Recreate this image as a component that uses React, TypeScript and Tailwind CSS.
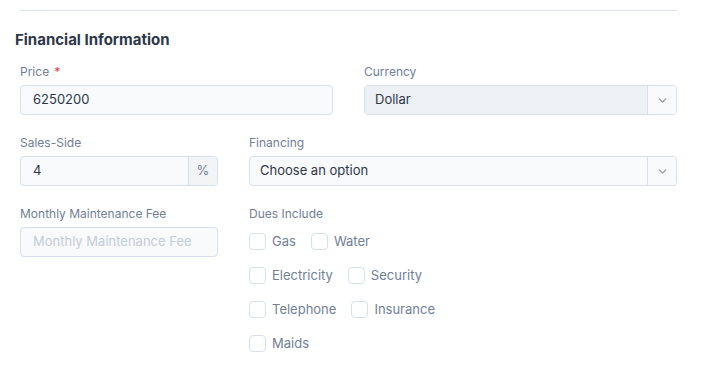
import { ChevronDown } from "lucide-react";

const Label = ({ text, required }: { text: string; required?: boolean }) => (
  <div className="h-4 text-[12px] leading-4 text-[#718096] mb-[5px]">
    {text}
    {required && <span className="ml-[5px] text-[#e53e3e]">*</span>}
  </div>
);

const Select = ({ value, filled }: { value: string; filled?: boolean }) => (
  <div className="flex h-[30px] rounded-[4px] border border-[#d5e0ec] bg-[#f8fafc] overflow-hidden">
    <div className={`flex-1 flex items-center px-[10px] text-[13px] text-[#2d3748] ${filled ? "bg-[#edf1f6]" : ""}`}>
      {value}
    </div>
    <div className="w-[29px] flex items-center justify-center border-l border-[#d5e0ec] bg-[#f8fafc]">
      <ChevronDown size={13} strokeWidth={2.5} className="text-[#9a9a9a]" />
    </div>
  </div>
);

const Check = ({ label }: { label: string }) => (
  <label className="flex items-center gap-[6px] h-[17px] text-[13px] leading-[17px] text-[#718096]">
    <span className="w-[17px] h-[17px] rounded-[4px] border border-[#d5e0ec] bg-white" />
    {label}
  </label>
);

export default function App() {
  return (
    <div className="w-[715px] h-[375px] bg-white pt-[10px] pl-[20px] font-['Inter',sans-serif]">
      <div className="w-[657px] border-t border-[#dbe4ef]" />
      <h2 className="-ml-[5px] mt-[19px] mb-[14px] text-[15px] leading-5 font-bold text-[#2d3748]">
        Financial Information
      </h2>

      <div className="w-[657px] grid grid-cols-[313px_1fr] gap-x-[31px]">
        <div>
          <Label text="Price" required />
          <div className="h-[30px] flex items-center px-[12px] rounded-[4px] border border-[#d5e0ec] bg-[#f8fafc] text-[13px] text-[#2d3748]">
            6250200
          </div>
        </div>
        <div>
          <Label text="Currency" />
          <Select value="Dollar" filled />
        </div>
      </div>

      <div className="w-[657px] mt-[20px] grid grid-cols-[198px_1fr] gap-x-[31px]">
        <div>
          <Label text="Sales-Side" />
          <div className="h-[30px] flex rounded-[4px] border border-[#d5e0ec] bg-[#f8fafc] overflow-hidden text-[13px]">
            <div className="flex-1 flex items-center px-[12px] text-[#2d3748]">4</div>
            <div className="w-[29px] flex items-center justify-center border-l border-[#d5e0ec] bg-[#f3f4f6] text-[#718096]">
              %
            </div>
          </div>
        </div>
        <div>
          <Label text="Financing" />
          <Select value="Choose an option" />
        </div>
      </div>

      <div className="w-[657px] mt-[20px] grid grid-cols-[198px_1fr] gap-x-[31px]">
        <div>
          <Label text="Monthly Maintenance Fee" />
          <div className="h-[30px] flex items-center px-[12px] rounded-[4px] border border-[#d5e0ec] bg-[#f8fafc] text-[13px] text-[#c5ccd6]">
            Monthly Maintenance Fee
          </div>
        </div>
        <div>
          <Label text="Dues Include" />
          <div className="flex flex-col gap-[17px] pt-[6px]">
            <div className="flex gap-[15px]">
              <Check label="Gas" />
              <Check label="Water" />
            </div>
            <div className="flex gap-[15px]">
              <Check label="Electricity" />
              <Check label="Security" />
            </div>
            <div className="flex gap-[15px]">
              <Check label="Telephone" />
              <Check label="Insurance" />
            </div>
            <div className="flex gap-[15px]">
              <Check label="Maids" />
            </div>
          </div>
        </div>
      </div>
    </div>
  );
}
